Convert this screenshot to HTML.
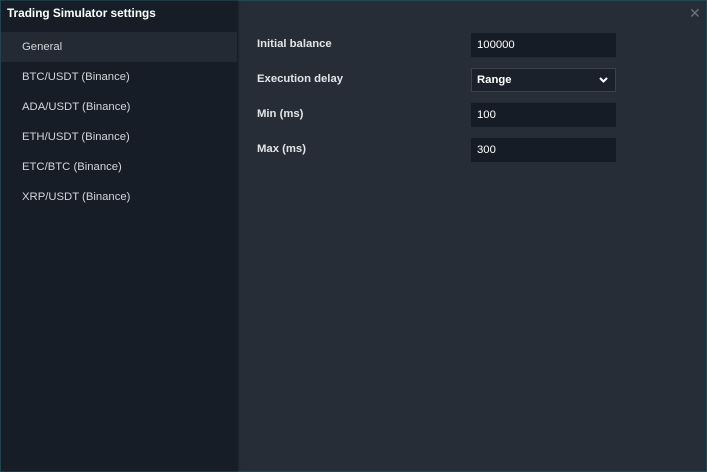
<!DOCTYPE html>
<html><head><style>
*{margin:0;padding:0;box-sizing:border-box}
body{width:707px;height:472px;background:#1f4a55;font-family:"Liberation Sans",sans-serif;font-size:11.3px;overflow:hidden}
.win{position:absolute;left:1px;top:1px;width:705px;height:470px;background:#272d37}
.side{position:absolute;left:0;top:0;width:236px;height:470px;background:#161d27;box-shadow:1px 0 2px #11161d}
.title{position:absolute;left:6px;top:5px;color:#fff;font-weight:bold;font-size:11.8px}
.item{position:absolute;left:0;width:236px;height:30px;line-height:30px;padding-left:21px;color:#d3d6da}
.sel{background:#232a34}
.lbl{position:absolute;left:256px;color:#e2e4e7;font-weight:bold;font-size:11.3px}
.inp{position:absolute;left:470px;width:145px;height:24px;background:#161c26;color:#fff;line-height:24px;padding-left:6px;font-size:11.3px}
.selbox{border:1px solid #3b424c;background:#1b212b;line-height:22px;padding-left:5px;font-weight:bold}
.x{position:absolute;left:688px;top:4px;color:#6b737d;font-size:14px}
</style></head><body><div class="win">
<div class="side">
<div class="title">Trading Simulator settings</div>
<div class="item sel" style="top:31px">General</div>
<div class="item" style="top:61px">BTC/USDT (Binance)</div>
<div class="item" style="top:91px">ADA/USDT (Binance)</div>
<div class="item" style="top:121px">ETH/USDT (Binance)</div>
<div class="item" style="top:151px">ETC/BTC (Binance)</div>
<div class="item" style="top:181px">XRP/USDT (Binance)</div>
</div>
<div class="x">✕</div>
<div class="lbl" style="top:37px">Initial balance</div>
<div class="lbl" style="top:72px">Execution delay</div>
<div class="lbl" style="top:107px">Min (ms)</div>
<div class="lbl" style="top:142px">Max (ms)</div>
<div class="inp" style="top:32px">100000</div>
<div class="inp selbox" style="top:67px">Range<svg style="position:absolute;right:7px;top:8px" width="9" height="6" viewBox="0 0 9 6"><path d="M1 1l3.5 3.5L8 1" stroke="#fff" stroke-width="2" fill="none"/></svg></div>
<div class="inp" style="top:102px">100</div>
<div class="inp" style="top:137px">300</div>
</div></body></html>
